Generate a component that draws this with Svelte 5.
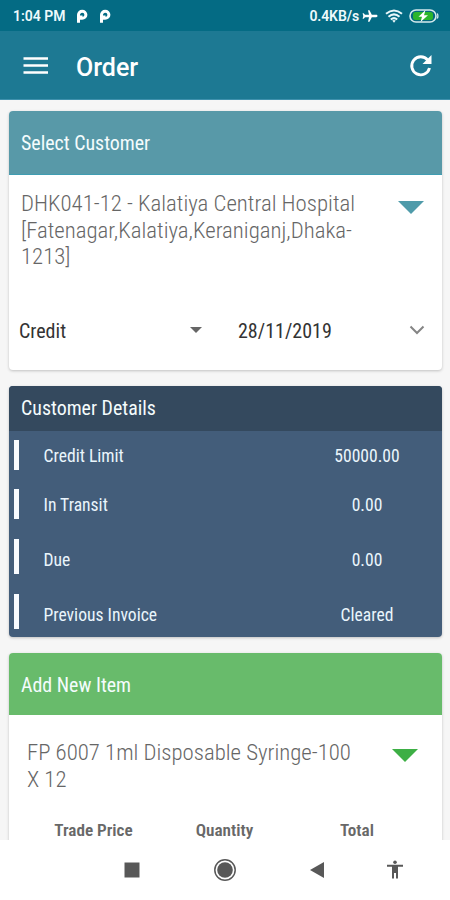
<script>
  let details = [
    { label: "Credit Limit", value: "50000.00", size: "short first" },
    { label: "In Transit", value: "0.00", size: "short" },
    { label: "Due", value: "0.00", size: "" },
    { label: "Previous Invoice", value: "Cleared", size: "" }
  ];
  let columns = ["Trade Price", "Quantity", "Total"];
</script>

<div class="screen">
  <div class="status">
    <span class="time">1:04 PM</span>
    {#each [0, 1] as n}
      <svg class="p" width="12" height="15" viewBox="0 0 12 15">
        <path d="M2.500 13.800V5.800A3.700 3.500 0 1 1 6.200 9.300H5V6.500" fill="none" stroke="#fff" stroke-width="3" />
      </svg>
    {/each}
    <span class="speed">0.4KB/s</span>
    <svg class="plane" width="16" height="14" viewBox="0 0 16 14">
      <path d="M15.500 7c0-.7-.6-1.200-1.300-1.200H9.800L7.500 1.300H6l1 4.500H3L1.700 4.200H.6L1.300 7l-.7 2.800h1.100L3 8.200h4L6 12.700h1.500L9.800 8.200h4.400c.7 0 1.300-.5 1.300-1.200z" fill="#fff" />
    </svg>
    <svg class="wifi" width="18" height="14" viewBox="0 0 18 14">
      <g fill="none" stroke="#e8f7fa" stroke-width="2">
        <path d="M1 4.800Q9-1.800 17 4.800" />
        <path d="M3.500 7.800Q9 3 14.500 7.800" />
        <path d="M5.800 10.500Q9 7.700 12.200 10.500" />
      </g>
      <path d="M7.200 11.500Q9 10.500 10.800 11.500L9 13.800z" fill="#e8f7fa" />
    </svg>
    <svg class="battery" width="30" height="14" viewBox="0 0 30 14">
      <rect x="1" y="1" width="26" height="12" rx="6" fill="#04687f" stroke="#d5eaed" stroke-width="1.600" />
      <rect x="4" y="3" width="20" height="8" rx="2.500" fill="#2bb52b" />
      <path d="M28.300 4.500q1.200 2.500 0 5" fill="none" stroke="#d5eaed" stroke-width="1.300" />
      <path d="M16.500 1L9.500 7.800h3.500L11.500 13 19 6.200h-4z" fill="#fff" />
    </svg>
  </div>

  <header>
    <svg width="26" height="20" viewBox="0 0 26 20">
      <path d="M.5 2.500h24.500M.5 9.500h24.500M.5 16.500h24.500" stroke="#fff" stroke-width="2.600" />
    </svg>
    <h1>Order</h1>
    <svg class="refresh" width="24" height="24" viewBox="0 0 24 24">
      <path d="M18.800 6.200A9 9 0 1 0 20.500 14" fill="none" stroke="#fff" stroke-width="2.900" />
      <path d="M22.500 1v9h-9z" fill="#fff" />
    </svg>
  </header>

  <main>
    <section class="card customer">
      <h2>Select Customer</h2>
      <div class="picker">
        <p>DHK041-12 - Kalatiya Central Hospital<br />[Fatenagar,Kalatiya,Keraniganj,Dhaka-<br />1213]</p>
        <svg width="26" height="14" viewBox="0 0 26 14"><path d="M0 0h26L13 13z" fill="#4f9baa" /></svg>
      </div>
      <div class="payment">
        <span class="type">Credit</span>
        <svg class="caret" width="12" height="7" viewBox="0 0 12 7"><path d="M0 0h12L6 6z" fill="#666" /></svg>
        <span class="date">28/11/2019</span>
        <svg class="chevron" width="16" height="10" viewBox="0 0 16 10">
          <path d="M1.500 1.500L8 8l6.500-6.500" fill="none" stroke="#858585" stroke-width="2" />
        </svg>
      </div>
    </section>

    <section class="card details">
      <h2>Customer Details</h2>
      {#each details as row}
        <div class="row {row.size}">
          <i></i>
          <span class="label">{row.label}</span>
          <span class="value">{row.value}</span>
        </div>
      {/each}
    </section>

    <section class="card item">
      <h2>Add New Item</h2>
      <div class="picker">
        <p>FP 6007 1ml Disposable Syringe-100<br />X 12</p>
        <svg width="26" height="14" viewBox="0 0 26 14"><path d="M0 0h26L13 13z" fill="#3daf45" /></svg>
      </div>
      <div class="columns">
        {#each columns as column}
          <span>{column}</span>
        {/each}
      </div>
    </section>
  </main>

  <nav>
    <svg width="16" height="16" viewBox="0 0 16 16"><path d="M.5 .5h15v15H.5z" fill="#585858" /></svg>
    <svg width="24" height="24" viewBox="0 0 24 24">
      <circle cx="12" cy="12" r="10.200" fill="none" stroke="#585858" stroke-width="1.500" />
      <circle cx="12" cy="12" r="7.800" fill="#585858" />
    </svg>
    <svg width="16" height="18" viewBox="0 0 16 18"><path d="M15 1v16L1 9z" fill="#585858" /></svg>
    <svg width="18" height="20" viewBox="0 0 18 20">
      <circle cx="9" cy="2.300" r="1.800" fill="#585858" />
      <path d="M1 4.800h16v1.900h-5V18.500h-2V13H8v5.500H6V6.700H1z" fill="#585858" />
    </svg>
  </nav>
</div>

<style>
  :global(body) {
    margin: 0;
  }

  .screen {
    width: 450px;
    height: 900px;
    display: flex;
    flex-direction: column;
    overflow: hidden;
    background: #f6f6f6;
    font-family: "Roboto Condensed", Roboto, sans-serif;
    font-stretch: 75%;
    white-space: nowrap;
  }

  svg {
    display: block;
    flex: none;
  }

  h1,
  h2,
  p {
    margin: 0;
  }

  .status {
    height: 31px;
    flex: none;
    box-sizing: border-box;
    padding: 1px 11px 0 13px;
    display: flex;
    align-items: center;
    background: #046b84;
    color: #eefafc;
    font-family: Roboto, sans-serif;
    font-stretch: 100%;
    font-size: 14px;
    font-weight: 600;
  }

  .time {
    width: 63px;
  }

  .p {
    margin-right: 11px;
  }

  .speed {
    margin-left: auto;
    font-size: 14px;
    letter-spacing: -0.1px;
  }

  .plane {
    margin-left: 3px;
  }

  .wifi {
    margin-left: 7px;
  }

  .battery {
    margin-left: 6px;
  }

  header {
    height: 69px;
    flex: none;
    box-sizing: border-box;
    padding: 2px 17px 0 23px;
    display: flex;
    align-items: center;
    background: #1d7993;
    border-bottom: 1px solid #3f91ad;
  }

  h1 {
    margin: 3px 0 0 27px;
    color: #fff;
    font-family: Roboto, sans-serif;
    font-stretch: 100%;
    font-size: 25px;
    font-weight: 500;
  }

  .refresh {
    margin-left: auto;
  }

  main {
    flex: none;
    height: 740px;
    box-sizing: border-box;
    padding: 11px 8px 0 9px;
    overflow: hidden;
  }

  .card {
    margin-bottom: 16px;
    border-radius: 4px;
    overflow: hidden;
    background: #fff;
    box-shadow: 0 1px 3px rgba(0, 0, 0, 0.22);
  }

  h2 {
    padding-left: 12px;
    color: #f4fcfd;
    font-size: 19.9px;
    font-weight: 400;
  }

  .customer {
    height: 259px;
  }

  .customer h2 {
    height: 63px;
    line-height: 66px;
    background: #5899a8;
    border-bottom: 1px solid #3f9db2;
  }

  .picker {
    display: flex;
    justify-content: space-between;
    padding: 16px 18px 0 12px;
    color: #666;
    font-size: 22.8px;
    font-weight: 320;
    line-height: 26.5px;
  }

  .picker svg {
    margin-top: 10px;
  }

  .payment {
    display: flex;
    align-items: center;
    margin-top: 47px;
    padding: 0 17px 0 10px;
    color: #333;
    font-size: 20px;
    line-height: 26px;
  }

  .type {
    width: 171px;
  }

  .date {
    margin-left: 36px;
  }

  .chevron {
    margin: 0 0 2px auto;
  }

  .details {
    height: 251px;
    background: #435d7a;
    color: #eaf5fc;
  }

  .details h2 {
    height: 45px;
    line-height: 45px;
    background: #34495e;
  }

  .row {
    height: 55px;
    display: flex;
    align-items: flex-end;
    font-size: 17.6px;
    line-height: 28px;
  }

  .row.short {
    height: 49px;
  }

  .row.first {
    height: 39px;
  }

  .row i {
    width: 5px;
    height: 35px;
    margin-left: 5px;
    background: #f8fbff;
  }

  .row.short i {
    height: 30px;
  }

  .label {
    margin-left: 24.5px;
  }

  .value {
    width: 100px;
    margin-left: auto;
    margin-right: 25px;
    text-align: center;
  }

  .item h2 {
    height: 62px;
    line-height: 66px;
    background: #68bb6b;
  }

  .item .picker {
    padding: 25px 24px 0 18px;
  }

  .item .picker svg {
    margin-top: 9px;
  }

  .columns {
    display: grid;
    grid-template-columns: 131px 131px 134px;
    padding: 23px 20px 30px 19px;
    color: #686868;
    font-size: 17.2px;
    font-weight: 600;
    line-height: 28px;
    text-align: center;
  }

  nav {
    height: 60px;
    flex: none;
    display: grid;
    grid-template-columns: 93px 93px 91px 66px;
    padding-left: 85px;
    align-items: center;
    justify-items: center;
    background: #fff;
  }
</style>
